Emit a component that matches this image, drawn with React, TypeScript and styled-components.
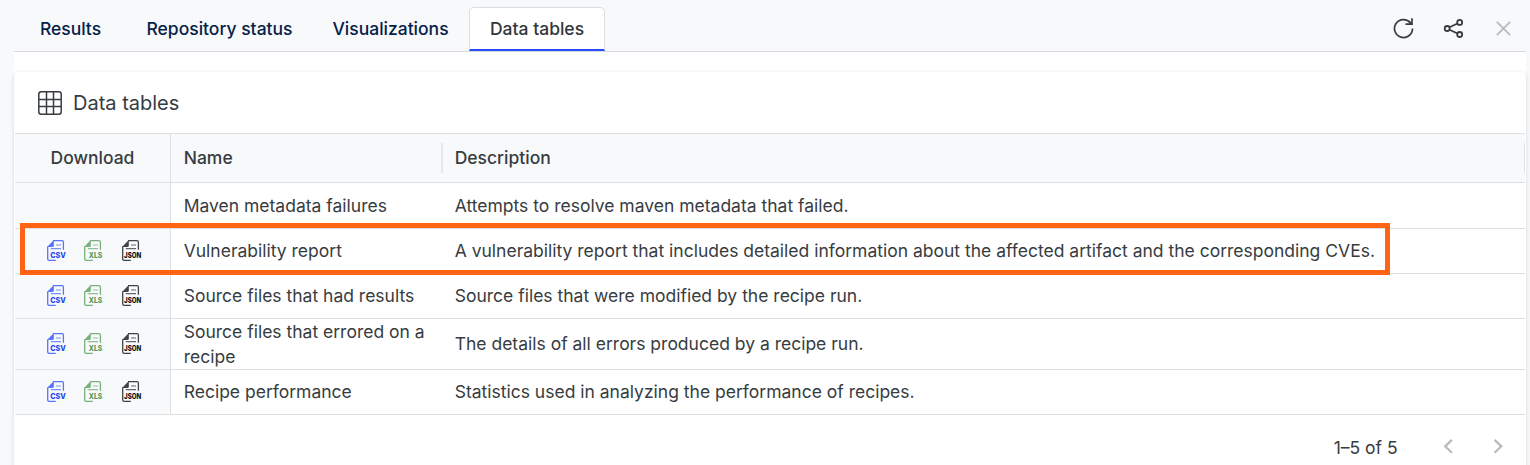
import React from "react";
import styled, { createGlobalStyle } from "styled-components";

const Global = createGlobalStyle`
  * { box-sizing: border-box; }
  html { background: #f8f9fb; }
  body { margin: 0; overflow: hidden; background: #f8f9fb; font-family: Inter, "Liberation Sans", sans-serif; color: #373c41; }
`;

const Page = styled.div`
  height: 465px;
  padding: 0 4px 0 14px;
  display: flex;
  flex-direction: column;
  overflow: hidden;
`;
const TopBar = styled.div`
  height: 52px;
  flex: none;
  padding-top: 7px;
  display: flex;
  align-items: flex-start;
  border-bottom: 1px solid #d7dade;
`;
const Tab = styled.div<{ $width: number; $active?: boolean }>`
  width: ${(p) => p.$width}px;
  height: 44px;
  display: flex;
  justify-content: center;
  font-size: 17.5px;
  line-height: 42px;
  font-weight: 500;
  white-space: nowrap;
  color: ${(p) => (p.$active ? "#32373c" : "#04214a")};
  border: 1px solid ${(p) => (p.$active ? "#dcdee1" : "transparent")};
  border-bottom: 2px solid ${(p) => (p.$active ? "#294bff" : "transparent")};
  border-radius: 5px 5px 0 0;
  background: ${(p) => (p.$active ? "#fff" : "transparent")};
`;
const Actions = styled.div`
  margin-left: auto;
  height: 42px;
  padding-right: 11px;
  display: flex;
  align-items: center;
  gap: 26px;
  svg { display: block; }
`;
const Body = styled.div`
  flex: 1;
  padding-top: 20px;
  background: #fff;
  display: flex;
`;
const Card = styled.section`
  flex: 1;
  height: 420px;
  padding: 0 1px;
  background: #fff;
  border-radius: 5px;
  box-shadow: 0 1px 4px rgba(0, 0, 0, 0.14);
`;
const CardTitle = styled.div`
  height: 61px;
  padding-left: 23px;
  display: flex;
  align-items: center;
  gap: 11px;
  font-size: 20px;
`;
const Table = styled.div`
  position: relative;
  border-top: 1px solid #dee0e2;
`;
const Row = styled.div<{ $height: number; $head?: boolean }>`
  height: ${(p) => p.$height}px;
  display: grid;
  grid-template-columns: 156px 271px 1fr;
  grid-template-rows: 100%;
  border-bottom: 1px solid #dee0e2;
  background: ${(p) => (p.$head ? "#f8f9fb" : "#fff")};
  font-weight: ${(p) => (p.$head ? 500 : 400)};
  font-size: 17.5px;
  line-height: 25px;
`;
const Cell = styled.div`
  display: flex;
  align-items: center;
  padding: 0 0 0.8px 12.7px;
`;
const DownloadCell = styled(Cell)`
  padding: 0 0 0.8px;
  justify-content: center;
  background: #f8f9fb;
  border-right: 1px solid #dee0e2;
`;
const FilesCell = styled(DownloadCell)`
  padding: 0 0 0 31px;
  justify-content: flex-start;
`;
const Files = styled.div`
  display: flex;
  gap: 15px;
  svg { display: block; }
  svg:last-child { margin-left: 1px; }
`;
const HeadCell = styled(Cell)`
  position: relative;
  &::after {
    content: "";
    position: absolute;
    right: -1px;
    top: 9px;
    width: 2px;
    height: 30px;
    background: #e6e7ea;
  }
  &:last-child::after {
    right: 0;
    width: 1px;
    background: #dee0e2;
  }
`;
const Highlight = styled.div`
  position: absolute;
  left: 5px;
  top: 89px;
  width: 1370px;
  height: 52px;
  border: 5px solid #ff6314;
`;
const Footer = styled.div`
  height: 64px;
  padding-right: 18px;
  display: flex;
  align-items: center;
  justify-content: flex-end;
  font-size: 17.5px;
  svg { display: block; }
`;

type FileKind = { label: string; color: string; page: string; x: number; width: number; size: number };

const kinds: FileKind[] = [
  { label: "CSV", color: "#2346f5", page: "#5874fa", x: 4.2, width: 15.6, size: 7.7 },
  { label: "XLS", color: "#529a59", page: "#78b07c", x: 5.8, width: 13.6, size: 7.7 },
  { label: "JSON", color: "#0b0b0b", page: "#404347", x: 3, width: 17.2, size: 7 },
];

const FileIcon = ({ label, color, page, x, width, size }: FileKind) => (
  <svg width="22" height="24" viewBox="0 0 22 24" fill="none">
    <path d="M1.700 7.500v12.400q0 1.400 1.400 1.400h6.700M7 1.700h9q1.400 0 1.400 1.400V10.800" stroke={page} strokeWidth="1.300" />
    <path d="M1 8 7.800 1v5.500q0 1.500-1.500 1.500Z" fill={page} />
    <path d="M10 6h5M4.800 9.700h10.200" stroke={page} strokeWidth="1.200" opacity=".8" />
    <text x={x} y="18.700" fontSize={size} fontWeight="800" textLength={width} lengthAdjust="spacingAndGlyphs" fill={color}>
      {label}
    </text>
  </svg>
);

const rows = [
  { name: "Maven metadata failures", text: "Attempts to resolve maven metadata that failed.", height: 46, files: false },
  { name: "Vulnerability report", text: "A vulnerability report that includes detailed information about the affected artifact and the corresponding CVEs.", height: 45, files: true },
  { name: "Source files that had results", text: "Source files that were modified by the recipe run.", height: 45, files: true },
  { name: "Source files that errored on a recipe", text: "The details of all errors produced by a recipe run.", height: 51, files: true },
  { name: "Recipe performance", text: "Statistics used in analyzing the performance of recipes.", height: 45, files: true },
];

export default function App() {
  return (
    <Page>
      <Global />
      <TopBar>
        <Tab $width={113}>Results</Tab>
        <Tab $width={185}>Repository status</Tab>
        <Tab $width={157}>Visualizations</Tab>
        <Tab $width={136} $active>Data tables</Tab>
        <Actions>
          <svg width="24" height="24" viewBox="0 0 24 24" fill="none" stroke="#373c41" strokeWidth="1.700">
            <path d="M21.500 12.500a9 9 0 1 1-2-5.600l1 1.200M21 2.200v6h-6.500" />
          </svg>
          <svg width="24" height="24" viewBox="0 0 24 24" fill="none" stroke="#373c41" strokeWidth="1.800">
            <circle cx="6.200" cy="12.500" r="2.500" />
            <circle cx="18.700" cy="6.400" r="2.500" />
            <circle cx="18.700" cy="18.500" r="2.500" />
            <path d="m8.500 11.300 8-3.800M8.500 13.700l8 3.800" />
          </svg>
          <svg width="24" height="24" viewBox="0 0 24 24" fill="none" stroke="#b7b9bb" strokeWidth="1.700">
            <path d="m5.800 5.800 13.400 13.400M19.200 5.800 5.800 19.200" />
          </svg>
        </Actions>
      </TopBar>
      <Body>
        <Card>
          <CardTitle>
            <svg width="24" height="24" viewBox="0 0 24 24" fill="none" stroke="#373c41" strokeWidth="1.500">
              <rect x=".8" y=".8" width="22.400" height="22.400" rx="2.500" />
              <path d="M1 8.500h22M1 15.500h22M8.500 1v22M15.500 1v22" />
            </svg>
            Data tables
          </CardTitle>
          <Table>
            <Row $height={49} $head>
              <DownloadCell>Download</DownloadCell>
              <HeadCell>Name</HeadCell>
              <HeadCell>Description</HeadCell>
            </Row>
            {rows.map((r) => (
              <Row key={r.name} $height={r.height}>
                <FilesCell>
                  {r.files && (
                    <Files>
                      {kinds.map((k) => <FileIcon key={k.label} {...k} />)}
                    </Files>
                  )}
                </FilesCell>
                <Cell>{r.name}</Cell>
                <Cell>{r.text}</Cell>
              </Row>
            ))}
            <Highlight />
          </Table>
          <Footer>
            1–5 of 5
            <svg width="109.400" height="24" viewBox="0.600 0 109.400 24" fill="none" stroke="#babbbd" strokeWidth="2.300">
              <path d="m54.500 4.800-6.700 6.500 6.700 6.500M97.200 4.800l6.700 6.500-6.700 6.500" />
            </svg>
          </Footer>
        </Card>
      </Body>
    </Page>
  );
}
